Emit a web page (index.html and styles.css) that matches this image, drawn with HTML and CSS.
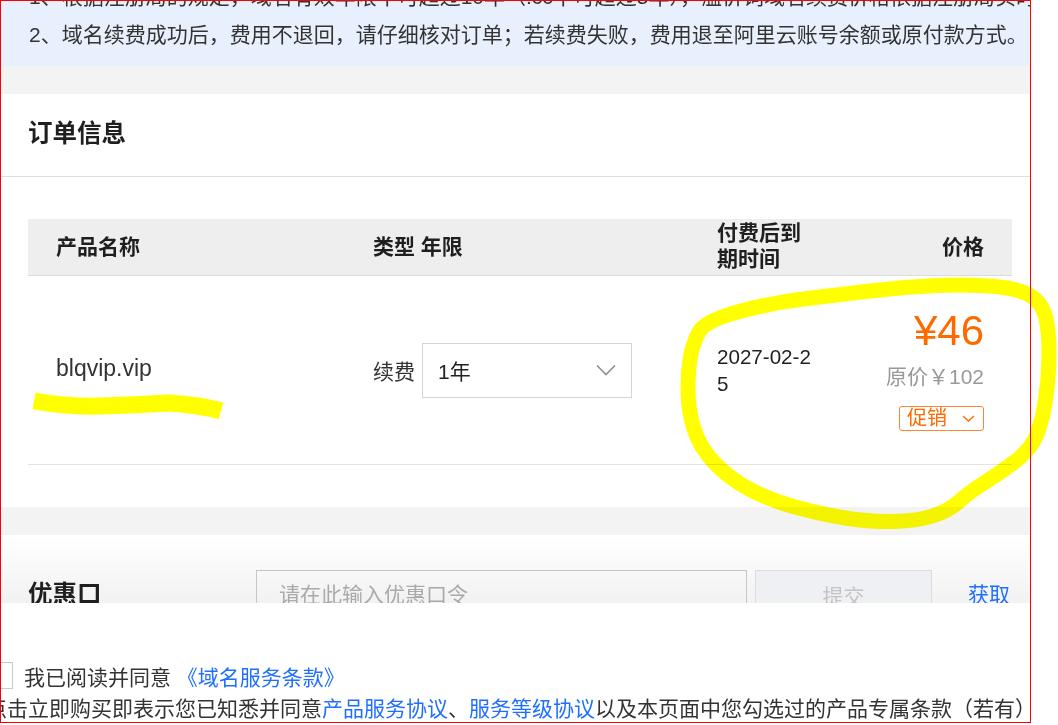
FILE: index.html
```html
<!DOCTYPE html>
<html lang="zh-CN">
<head>
    <meta charset="UTF-8">
    <meta name="viewport" content="width=device-width, initial-scale=1.0">
    <title>域名续费 - 确认订单</title>
    <link rel="stylesheet" href="styles.css">
</head>
<body>
    <div class="shot">
        <div class="notice">
            <div class="notice-list">
                <p class="notice-line">1、根据注册局的规定，域名有效年限不可超过10年（.cc不可超过5年），溢价词域名续费价格依据注册局实时价格为准。</p>
                <p class="notice-line">2、域名续费成功后，费用不退回，请仔细核对订单；若续费失败，费用退至阿里云账号余额或原付款方式。</p>
            </div>
        </div>
        <div class="gap"></div>

        <div class="card">
            <div class="card-head">
                <h2 class="card-title">订单信息</h2>
            </div>
            <div class="order-table">
                <div class="order-row order-head">
                    <div class="col-name">产品名称</div>
                    <div class="col-type">类型 年限</div>
                    <div class="col-date">付费后到期时间</div>
                    <div class="col-price">价格</div>
                </div>
                <div class="order-row order-item">
                    <div class="col-name domain">blqvip.vip</div>
                    <div class="col-type">
                        <span>续费</span>
                        <div class="select">
                            <span>1年</span>
                            <svg class="select-arrow" width="20" height="12" viewBox="0 0 20 12"><path d="M1 1.5 L10 10.5 L19 1.5" fill="none" stroke="#8f8f8f" stroke-width="1.6"/></svg>
                        </div>
                    </div>
                    <div class="col-date">2027-02-25</div>
                    <div class="col-price">
                        <div class="price-now">¥46</div>
                        <div class="price-old">原价￥102</div>
                        <div class="promo">
                            <span>促销</span>
                            <svg width="13" height="7" viewBox="0 0 13 7"><path d="M1 1 L6.5 6 L12 1" fill="none" stroke="#ff6a00" stroke-width="1.3"/></svg>
                        </div>
                    </div>
                </div>
            </div>
        </div>
        <div class="gap"></div>

        <div class="coupon">
            <div class="coupon-label">优惠口</div>
            <input type="text" class="coupon-input" placeholder="请在此输入优惠口令">
            <button type="button" class="coupon-btn">提交</button>
            <a href="#" class="coupon-link">获取</a>
        </div>

        <div class="agree">
            <div class="agree-check">
                <span class="checkbox"></span>
                <span>我已阅读并同意 <a href="#">《域名服务条款》</a></span>
            </div>
            <p class="agree-note">点击立即购买即表示您已知悉并同意<a href="#">产品服务协议</a>、<a href="#">服务等级协议</a>以及本页面中您勾选过的产品专属条款（若有）</p>
        </div>
    </div>

    <svg class="marks" width="1058" height="725" viewBox="0 0 1058 725">
        <path d="M34,401 Q68,407 101,406 T169,403 Q200,405 221,411" fill="none" stroke="#ffff00" stroke-width="17"/>
        <path d="M737.5,312 Q770,303 803.5,299 Q837,295 870,291 Q903,287 936.5,285.5 Q970,284 995,286.5 Q1020,289 1031,296 Q1042,303 1045.5,316.5 Q1049,330 1049,353.5 Q1049,377 1045.5,400 Q1042,423 1036,436.5 Q1030,450 1015,461.5 Q1000,473 984,483 Q968,493 959,501.5 Q950,510 934,515.5 Q918,521 894,521.5 Q870,522 845,518 Q820,514 795,507 Q770,500 750,489.5 Q730,479 715,463.5 Q700,448 694,429 Q688,410 688,390 Q688,370 690.5,356.5 Q693,343 699,332 Q705,321 737.5,312 Z" fill="none" stroke="#ffff00" stroke-width="15" stroke-linejoin="round"/>
    </svg>
</body>
</html>
```

FILE: styles.css
```css
body {
    margin: 0;
    width: 1058px;
    height: 725px;
    position: relative;
    overflow: hidden;
    background: #fff;
    font-family: "Liberation Sans", "Noto Sans CJK SC", sans-serif;
    font-size: 21px;
    color: #333;
}
a {
    color: #1f6fff;
    text-decoration: none;
}
.shot {
    width: 1029px;
    height: 721px;
    border: 1px solid #ff0000;
    overflow: hidden;
}
.notice {
    height: 65px;
    overflow: hidden;
    background-color: #e9f0fd;
    padding-left: 28px;
}
.notice-list {
    margin-top: -23px;
}
.notice-line {
    margin: 0;
    line-height: 37.5px;
    white-space: nowrap;
}
.gap {
    height: 28px;
    background-color: #f3f3f3;
}
.card {
    background: #fff;
    padding-bottom: 42px;
}
.card-head {
    padding: 22px 27px 24px;
    border-bottom: 1px solid #dedede;
}
.card-title {
    margin: 0;
    font-size: 24.5px;
    line-height: 36px;
    font-weight: bold;
    color: #1f1f1f;
}
.order-table {
    margin: 42px 18px 0 27px;
}
.order-row {
    display: grid;
    grid-template-columns: 317px 344px 100px 1fr;
    align-items: center;
    padding: 0 28px;
}
.order-head {
    height: 56px;
    background-color: #eeeeee;
    border-bottom: 1px solid #dcdcdc;
    font-weight: bold;
    color: #1f1f1f;
    line-height: 24px;
}
.order-head .col-date {
    line-height: 26px;
    padding-bottom: 2px;
}
.order-item {
    height: 188px;
    border-bottom: 1px solid #e3e3e3;
}
.col-price {
    text-align: right;
}
.domain {
    font-size: 23px;
    color: #333;
    padding-bottom: 3px;
}
.order-item .col-type {
    display: flex;
    align-items: center;
}
.select {
    margin-left: 7px;
    width: 210px;
    height: 55px;
    box-sizing: border-box;
    border: 1px solid #d4d4d4;
    padding: 0 15px;
    display: flex;
    align-items: center;
    justify-content: space-between;
    color: #222;
}
.order-item .col-date {
    font-size: 20.6px;
    line-height: 27.5px;
    word-break: break-all;
    color: #1f1f1f;
}
.order-item .col-price {
    display: flex;
    flex-direction: column;
    align-items: flex-end;
}
.price-now {
    font-size: 42px;
    line-height: 42px;
    color: #ff6a00;
}
.price-old {
    margin-top: 11px;
    font-size: 21px;
    line-height: 28px;
    color: #999;
}
.promo {
    margin-top: 15px;
    height: 25px;
    box-sizing: border-box;
    border: 1px solid #ff8533;
    border-radius: 3px;
    padding: 0 8px 0 7px;
    display: flex;
    align-items: center;
    font-size: 20px;
    line-height: 23px;
    color: #ff6a00;
}
.promo svg {
    margin-left: 15px;
}
.coupon {
    height: 68px;
    box-sizing: border-box;
    overflow: hidden;
    padding: 35px 0 0 27px;
    display: flex;
    align-items: flex-start;
    background: linear-gradient(#ffffff, #f2f2f2);
}
.coupon-label {
    width: 228px;
    height: 50px;
    line-height: 50px;
    font-size: 24.5px;
    font-weight: bold;
    color: #1f1f1f;
}
.coupon-input {
    width: 491px;
    height: 50px;
    box-sizing: border-box;
    border: 1px solid #c4c6cf;
    background: transparent;
    padding: 0 22px;
    font-family: inherit;
    font-size: 21px;
    outline: none;
}
.coupon-input::placeholder {
    color: #aaa;
}
.coupon-btn {
    margin-left: 8px;
    width: 177px;
    height: 50px;
    border: 1px solid #dadce0;
    background-color: #eff0f3;
    color: #c4c4c4;
    font-family: inherit;
    font-size: 21px;
}
.coupon-link {
    margin-left: 36px;
    line-height: 50px;
}
.agree {
    margin-left: -15px;
}
.agree-check {
    margin-top: 59px;
    display: flex;
    align-items: center;
    height: 27px;
}
.checkbox {
    width: 27px;
    height: 27px;
    box-sizing: border-box;
    border: 1px solid #c8c8c8;
    margin-right: 11px;
}
.agree-note {
    margin: 6px 0 0;
    line-height: 28px;
    white-space: nowrap;
}
.marks {
    position: absolute;
    left: 0;
    top: 0;
    pointer-events: none;
    mix-blend-mode: multiply;
}
```
